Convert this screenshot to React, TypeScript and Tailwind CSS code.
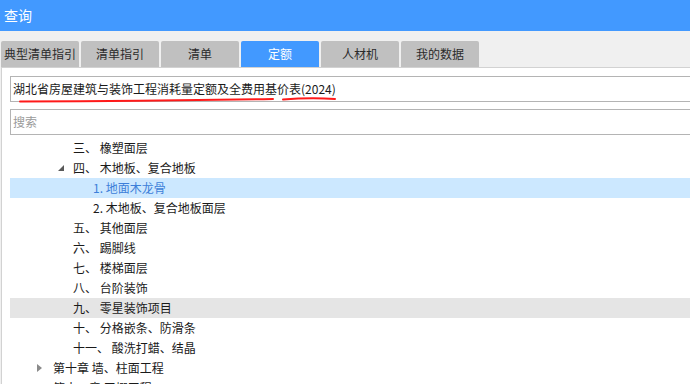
import React from "react";

const tabs = ["典型清单指引", "清单指引", "清单", "定额", "人材机", "我的数据"];

type Row = {
  level: 0 | 1 | 2;
  text: string;
  toggle?: "open" | "closed";
  state?: "selected" | "hover";
};

const rows: Row[] = [
  { level: 1, text: "三、 橡塑面层" },
  { level: 1, text: "四、 木地板、复合地板", toggle: "open" },
  { level: 2, text: "1. 地面木龙骨", state: "selected" },
  { level: 2, text: "2. 木地板、复合地板面层" },
  { level: 1, text: "五、 其他面层" },
  { level: 1, text: "六、 踢脚线" },
  { level: 1, text: "七、 楼梯面层" },
  { level: 1, text: "八、 台阶装饰" },
  { level: 1, text: "九、 零星装饰项目", state: "hover" },
  { level: 1, text: "十、 分格嵌条、防滑条" },
  { level: 1, text: "十一、 酸洗打蜡、结晶" },
  { level: 0, text: "第十章 墙、柱面工程", toggle: "closed" },
  { level: 0, text: "第十一章 天棚工程", toggle: "closed" },
];

function Toggle({ kind }: { kind: "open" | "closed" }) {
  if (kind === "open") {
    return (
      <svg width="6" height="6" viewBox="0 0 6 6" className="absolute left-[-15px] top-[7px]">
        <path d="M6 0 L6 6 L0 6 Z" fill="#595959" />
      </svg>
    );
  }
  return (
    <svg width="5" height="8" viewBox="0 0 5 8" className="absolute left-[-16px] top-[6px]">
      <path d="M0 0 L5 4 L0 8 Z" fill="#8a8a8a" />
    </svg>
  );
}

function TreeRow({ row }: { row: Row }) {
  const pad = row.level === 0 ? "pl-[43px]" : row.level === 1 ? "pl-[63px]" : "pl-[83px]";
  const bg =
    row.state === "selected" ? "bg-[#cce8ff]" : row.state === "hover" ? "bg-[#e5e5e5]" : "";
  const color = row.state === "selected" ? "text-[#3d7fd9]" : "text-[#1a1a1a]";
  return (
    <div className={`flex h-[20px] shrink-0 items-center ${pad} ${bg}`}>
      <span className={`relative whitespace-pre leading-[20px] ${color}`}>
        {row.toggle && <Toggle kind={row.toggle} />}
        {row.text}
      </span>
    </div>
  );
}

export default function App() {
  return (
    <div
      className="relative flex h-[384px] w-[690px] flex-col overflow-hidden bg-[#f0f0f0] text-[12px]"
      style={{ fontFamily: '"Noto Sans CJK SC", "Microsoft YaHei", sans-serif' }}
    >
      <div className="flex h-[31px] shrink-0 items-center bg-[#4299ff] pl-[4px] text-[14px] text-white">
        查询
      </div>

      <div className="flex shrink-0 gap-[2px] pl-[1px] pt-[10px]">
        {tabs.map((t) => (
          <div
            key={t}
            className={`flex h-[26px] w-[78px] items-center justify-center rounded-t-[2px] text-[12px] ${
              t === "定额" ? "bg-[#4299ff] text-white" : "bg-[#c0c0c0] text-[#2b2b2b]"
            }`}
          >
            {t}
          </div>
        ))}
      </div>

      <div className="ml-[1px] flex flex-1 flex-col overflow-hidden border-l border-t border-[#d2d2d2] bg-white">
        <div className="ml-[8px] mt-[8px] flex h-[26px] shrink-0 items-center border-y border-l border-[#b4b4b4] pl-[2px] text-[12px] text-[#1a1a1a]">
          湖北省房屋建筑与装饰工程消耗量定额及全费用基价表(2024)
        </div>
        <div className="ml-[8px] mt-[7px] flex h-[26px] shrink-0 items-center border-y border-l border-[#b4b4b4] pl-[2px] text-[12px] text-[#9a9a9a]">
          搜索
        </div>

        <div className="ml-[8px] mt-[3px] flex flex-col">
          {rows.map((r) => (
            <TreeRow key={r.text} row={r} />
          ))}
        </div>
      </div>

      <svg
        width="690"
        height="384"
        viewBox="0 0 690 384"
        className="pointer-events-none absolute left-0 top-0"
      >
        <path d="M20 101.5 Q 150 101 273 99" stroke="#ff1a1a" strokeWidth="2" fill="none" strokeLinecap="round" />
        <path d="M283 99.5 Q 310 97.5 335 99" stroke="#ff1a1a" strokeWidth="2" fill="none" strokeLinecap="round" />
      </svg>
    </div>
  );
}
